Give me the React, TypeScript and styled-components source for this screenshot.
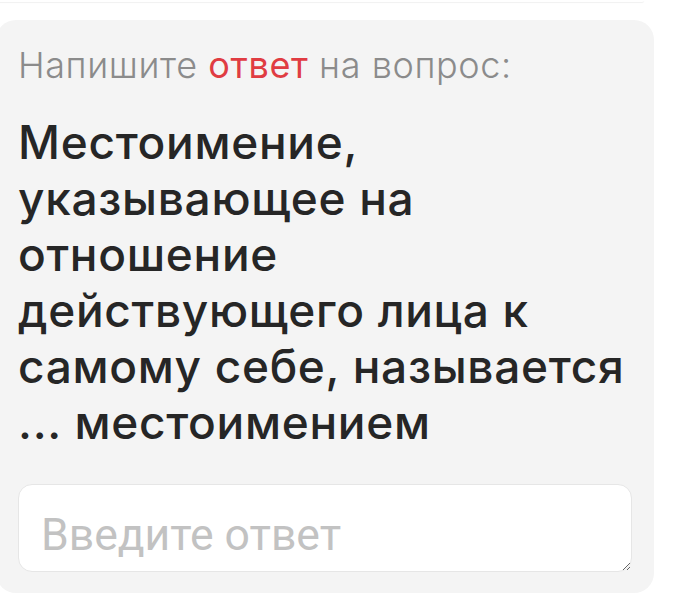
import React from "react";
import styled, { createGlobalStyle } from "styled-components";

const GlobalStyle = createGlobalStyle`
  html, body {
    margin: 0;
    padding: 0;
    background: #ffffff;
  }
  body {
    font-family: Inter, "Noto Sans", sans-serif;
  }
`;

const Page = styled.div`
  width: 680px;
  height: 599px;
  overflow: hidden;
  background: #ffffff;
`;

const PrevCard = styled.div`
  height: 2px;
  width: 648px;
  margin-left: -4px;
  background: #ffffff;
  border-bottom-left-radius: 18px;
  border-bottom-right-radius: 18px;
  box-shadow: 0 1px 1px rgba(0, 0, 0, 0.06);
`;

const Card = styled.div`
  margin: 18px 0 0 -4px;
  width: 658px;
  box-sizing: border-box;
  padding: 22px 22px 21px 22px;
  background: #f4f4f4;
  border-radius: 20px;
  display: flex;
  flex-direction: column;
`;

const Hint = styled.div`
  font-family: Inter, sans-serif;
  font-weight: 300;
  font-size: 36px;
  line-height: 46px;
  color: #8b8b8b;
  letter-spacing: 0.6px;
`;

const Accent = styled.span`
  color: #e03c42;
  font-weight: 400;
`;

const Question = styled.div`
  margin-top: 26px;
  font-family: Inter, sans-serif;
  font-weight: 500;
  font-size: 46px;
  line-height: 56px;
  letter-spacing: 0.7px;
  color: #262626;
`;

const AnswerInput = styled.textarea`
  margin-top: 34px;
  height: 88px;
  box-sizing: border-box;
  width: 614px;
  padding: 28px 22px 0 22px;
  border: 1px solid #e6e6e6;
  border-radius: 14px;
  background: #ffffff;
  font-family: Roboto, sans-serif;
  font-size: 44.5px;
  line-height: 44px;
  color: #222;
  outline: none;
  resize: both;
  overflow: hidden;
  &::placeholder {
    color: #c2c2c2;
  }
`;

export default function App() {
  return (
    <Page>
      <GlobalStyle />
      <PrevCard />
      <Card>
        <Hint>
          Напишите <Accent>ответ</Accent> на вопрос:
        </Hint>
        <Question>
          Местоимение, указывающее на отношение действующего лица к самому
          себе, называется ... местоимением
        </Question>
        <AnswerInput placeholder="Введите ответ" />
      </Card>
    </Page>
  );
}
